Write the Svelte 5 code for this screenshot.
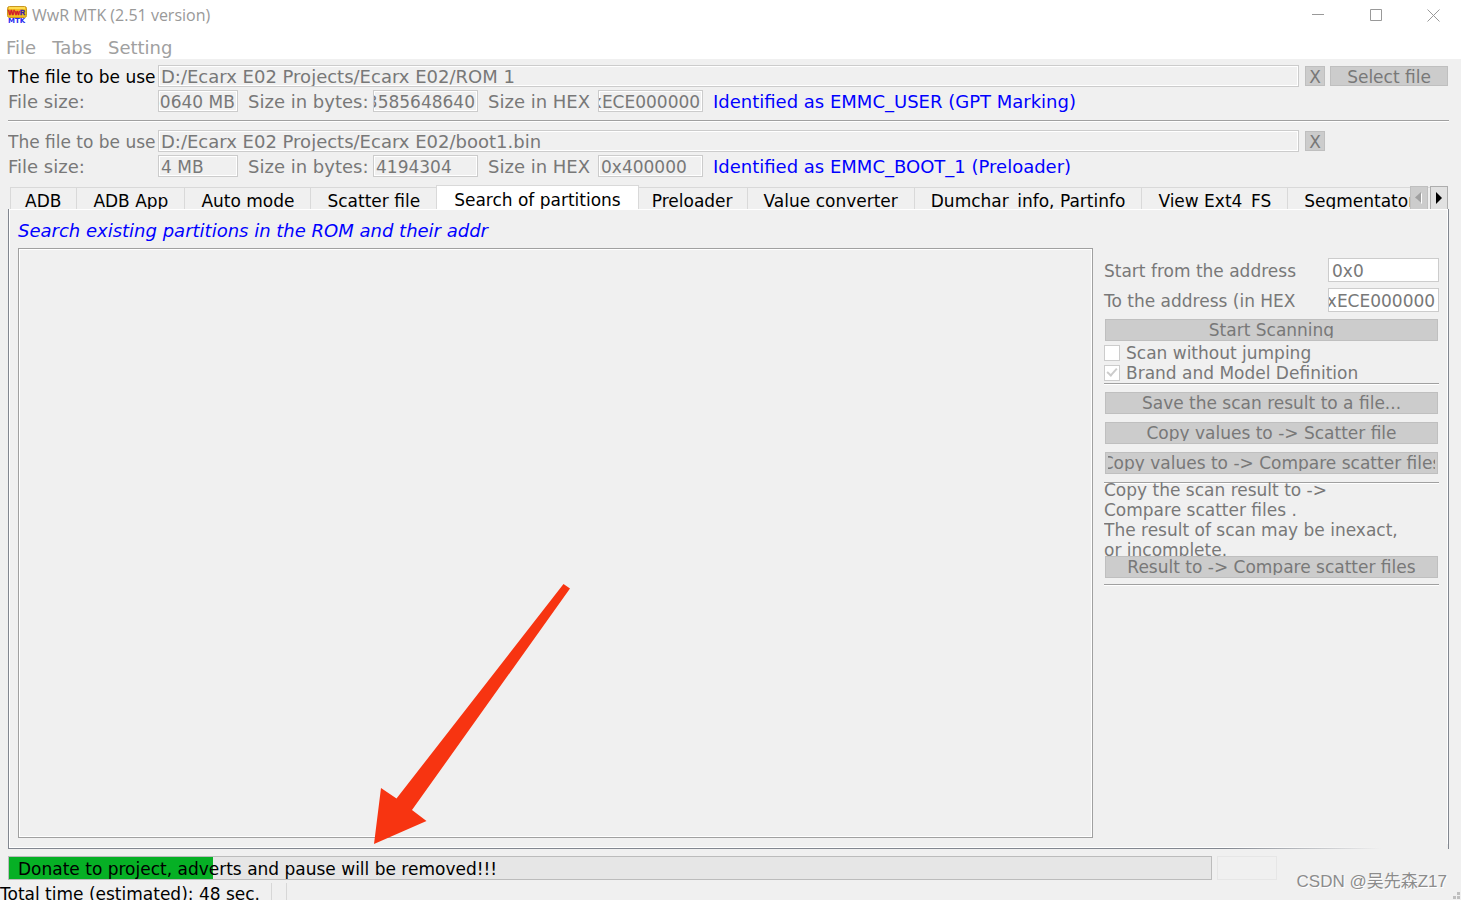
<script>
  const menus = ['File', 'Tabs', 'Setting'];

  const files = [
    {
      path: 'D:/Ecarx E02 Projects/Ecarx E02/ROM 1',
      size: '60640 MB',
      bytes: '63585648640',
      hex: '0xECE000000',
      kind: 'Identified as EMMC_USER (GPT Marking)',
      selectable: true,
    },
    {
      path: 'D:/Ecarx E02 Projects/Ecarx E02/boot1.bin',
      size: '4 MB',
      bytes: '4194304',
      hex: '0x400000',
      kind: 'Identified as EMMC_BOOT_1 (Preloader)',
      selectable: false,
    },
  ];

  const tabs = [
    'ADB',
    'ADB App',
    'Auto mode',
    'Scatter file',
    'Search of partitions',
    'Preloader',
    'Value converter',
    'Dumchar_info, Partinfo',
    'View Ext4_FS',
    'Segmentator',
  ];

  let active = $state('Search of partitions');
  let from = $state('0x0');
  let to = $state('0xECE000000');
  let noJump = $state(false);
  let brand = $state(true);
  let progress = $state(17);

  // long values show their tail, like the native edit boxes
  function showEnd(node) {
    node.scrollLeft = node.scrollWidth;
  }
</script>

<div class="window">
  <header class="titlebar">
    <svg class="logo" width="20" height="18" viewBox="0 0 20 18">
      <rect x="0.5" y="0.5" width="19" height="11" rx="2" fill="#f2bd1e" stroke="#c99722" />
      <rect x="2" y="1" width="16" height="2" fill="#ffdc50" />
      <text x="1" y="9" font-size="7" fill="#d0102a" stroke="#d0102a" stroke-width="0.400">Ww<tspan fill="#3a1fb0" stroke="#3a1fb0">R</tspan></text>
      <text class="mtk" x="1" y="17" font-size="7" fill="#2a2af0">MTK</text>
    </svg>
    <h1>WwR MTK (2.51 version)</h1>
    <div class="window-buttons">
      <button type="button" aria-label="Minimize">
        <svg width="13" height="13" viewBox="0 0 13 13"><path d="M0 5.5h12" /></svg>
      </button>
      <button type="button" aria-label="Maximize">
        <svg width="13" height="13" viewBox="0 0 13 13"><path d="M.5 .5h11v11h-11z" /></svg>
      </button>
      <button type="button" aria-label="Close">
        <svg width="13" height="13" viewBox="0 0 13 13"><path d="M.5 .5l12 12M12.5 .5l-12 12" /></svg>
      </button>
    </div>
  </header>

  <nav class="menubar">
    {#each menus as menu}
      <button type="button">{menu}</button>
    {/each}
  </nav>

  <section class="files">
    {#each files as file, i}
      <div class="file">
        <div class="path-row">
          <label for="path-{i}" class:strong={file.selectable}>The file to be use</label>
          <input id="path-{i}" value={file.path} readonly />
          <button type="button" class="btn" aria-label="Clear file">X</button>
          {#if file.selectable}
            <button type="button" class="btn select">Select file</button>
          {/if}
        </div>
        <div class="info-row">
          <label for="size-{i}">File size:</label>
          <input id="size-{i}" value={file.size} readonly use:showEnd />
          <label for="bytes-{i}">Size in bytes:</label>
          <input id="bytes-{i}" value={file.bytes} readonly use:showEnd />
          <label for="hex-{i}">Size in HEX</label>
          <input id="hex-{i}" value={file.hex} readonly use:showEnd />
          <span class="kind">{file.kind}</span>
        </div>
      </div>
    {/each}
  </section>

  <div class="tabstrip">
    <div class="tabs">
      {#each tabs as tab}
        <button type="button" class="tab" class:active={active === tab} onclick={() => active = tab}>{tab}</button>
      {/each}
    </div>
    <div class="scrollers">
      <button type="button" class="back" aria-label="Previous tabs">
        <svg width="8" height="12" viewBox="0 0 8 12"><path d="M7 1v11L1 6.500z" fill="#fff" /><path d="M6 0v11L0 5.500z" fill="#a0a0a0" /></svg>
      </button>
      <button type="button" aria-label="Next tabs">
        <svg width="8" height="12" viewBox="0 0 8 12"><path d="M1 0v12L7 6z" fill="#000" /></svg>
      </button>
    </div>
  </div>

  <main class="page">
    <h2>Search existing partitions in the ROM and their addr</h2>
    <div class="columns">
      <div class="results"></div>
      <div class="side">
        <div class="range">
          <label for="from">Start from the address</label>
          <input id="from" bind:value={from} />
          <label for="to">To the address (in HEX</label>
          <input id="to" bind:value={to} use:showEnd />
        </div>
        <button type="button" class="btn wide"><span>Start Scanning</span></button>
        <div class="checks">
          <label><input type="checkbox" bind:checked={noJump} />Scan without jumping</label>
          <label><input type="checkbox" bind:checked={brand} />Brand and Model Definition</label>
        </div>
        <div class="group">
          <button type="button" class="btn wide"><span>Save the scan result to a file...</span></button>
          <button type="button" class="btn wide"><span>Copy values to -&gt; Scatter file</span></button>
          <button type="button" class="btn wide"><span>Copy values to -&gt; Compare scatter files</span></button>
        </div>
        <div class="result-group">
          <p>
            Copy the scan result to -&gt;<br />
            Compare scatter files .<br />
            The result of scan may be inexact,<br />
            or incomplete.
          </p>
          <button type="button" class="btn wide"><span>Result to -&gt; Compare scatter files</span></button>
        </div>
      </div>
    </div>
  </main>

  <div class="bottom">
    <div class="progress">
      <div class="fill" style="width: {progress}%"></div>
      <span>Donate to project, adverts and pause will be removed!!!</span>
    </div>
    <div class="pause-box"></div>
  </div>

  <footer class="statusbar">
    <span class="cell">Total time (estimated): 48 sec.</span>
    <span class="cell small"></span>
  </footer>

  <svg class="arrow" width="196" height="260" viewBox="0 0 196 260">
    <path d="M189.500 0L196 4.500L38 226L52.500 237L0 260L7 204L22.500 214.500z" fill="#f73411" />
  </svg>

  <div class="watermark"><span>CSDN @吴先森Z17</span></div>
  <svg class="grip" width="8" height="8" viewBox="0 0 8 8">
    <path d="M4 0h3v3h-3zM0 4h3v3h-3zM4 4h3v3h-3z" fill="#bfbfbf" />
  </svg>
</div>

<style>
  :global(body) {
    background: #f0f0f0;
  }

  .window {
    position: relative;
    display: flex;
    flex-direction: column;
    height: 100vh;
    overflow: hidden;
    background: #f0f0f0;
    color: #787878;
    font-family: Verdana, 'DejaVu Sans', sans-serif;
    font-size: 17px;
    line-height: 20px;
    white-space: nowrap;
  }

  button,
  input {
    box-sizing: border-box;
    margin: 0;
    padding: 0;
    border: none;
    border-radius: 0;
    background: none;
    color: inherit;
    font: inherit;
    outline: none;
  }

  .titlebar {
    display: flex;
    align-items: center;
    gap: 5px;
    height: 30px;
    padding-left: 7px;
    background: #fff;
    color: #999;
  }

  .logo {
    font-family: 'Liberation Sans', sans-serif;
    font-weight: 700;
  }

  .mtk {
    font-family: 'DejaVu Sans', sans-serif;
  }

  h1 {
    flex: 1;
    margin: 0;
    font-family: 'Segoe UI', 'Open Sans', sans-serif;
    font-size: 16px;
    font-weight: 400;
  }

  .window-buttons {
    display: flex;
  }

  .window-buttons button {
    display: flex;
    align-items: center;
    justify-content: center;
    width: 58px;
    height: 30px;
  }

  .window-buttons button:last-child {
    width: 56px;
  }

  .window-buttons svg {
    fill: none;
    stroke: #999;
  }

  .menubar {
    display: flex;
    gap: 16px;
    height: 29px;
    padding: 0 6px;
    background: #fff;
    color: #a0a0a0;
    font-size: 18px;
  }

  .menubar button {
    padding-top: 6px;
  }

  .files {
    padding: 6px 12px 0 8px;
    font-size: 18px;
  }

  .file:first-child {
    margin-bottom: 9px;
    padding-bottom: 8px;
    border-bottom: 1px solid #a0a0a0;
    box-shadow: 0 1px #fff;
  }

  .path-row {
    display: grid;
    grid-template-columns: 150px 1fr 20px 124px;
    align-items: center;
    margin-bottom: 3px;
  }

  .path-row label {
    overflow: hidden;
    padding-top: 2px;
    font-size: 17px;
  }

  .path-row label.strong {
    color: #000;
  }

  .path-row input {
    margin-right: 6px;
  }

  .path-row .select {
    margin: 0 1px 0 5px;
  }

  .files input {
    height: 22px;
    padding: 1px 2px 0 0;
    border: 1px solid #ccc;
    box-shadow: inset 0 0 0 1px #fff;
    text-indent: 2px;
  }

  .info-row {
    display: grid;
    grid-template-columns: 150px 80px 135px 105px 120px 105px 1fr;
    align-items: center;
  }

  .info-row label {
    padding-top: 2px;
  }

  .info-row input + label {
    padding-left: 10px;
  }

  .info-row input {
    width: 100%;
    font-size: 17px;
  }

  .kind {
    padding: 2px 0 0 10px;
    color: #00f;
  }

  .btn {
    height: 20px;
    padding: 1px 0 0;
    overflow: hidden;
    background: #ccc;
    border: 1px solid #bfbfbf;
    font-size: 17px;
    line-height: 18px;
  }

  .tabstrip {
    position: relative;
    padding: 8px 31px 0 10px;
    color: #000;
  }

  .tabs {
    display: flex;
    align-items: flex-end;
    height: 24px;
    overflow: hidden;
  }

  .tab {
    display: flex;
    flex: none;
    height: 22px;
    padding: 3px 16px 0;
    border: solid #d9d9d9;
    border-width: 1px 0 0 1px;
    overflow: hidden;
  }

  .tab:first-child {
    padding: 3px 15px 0 14px;
  }

  .tab:last-child {
    flex: 1 0 auto;
  }

  .tab.active {
    height: 24px;
    padding: 4px 17px 0;
    background: #fff;
    border-right-width: 1px;
  }

  .tab.active + .tab {
    border-left: none;
    padding: 3px 14px 0 13px;
  }

  .scrollers {
    position: absolute;
    top: 9px;
    right: 13px;
    display: flex;
    gap: 2px;
  }

  .scrollers button {
    display: flex;
    align-items: center;
    justify-content: center;
    width: 18px;
    height: 23px;
    border: 1px solid #adadad;
    border-bottom: none;
    background: #e1e1e1;
  }

  .scrollers .back {
    border-color: #bfbfbf;
    background: #ccc;
  }

  .page {
    flex: 1;
    display: flex;
    flex-direction: column;
    min-height: 0;
    margin: 0 12px 0 8px;
    padding: 0 8px 10px;
    border: solid #828790;
    border-width: 0 1px 1px;
    box-shadow: inset 0 0 0 1px #fff;
  }

  h2 {
    margin: 0;
    padding: 12px 1px 7px;
    color: #00f;
    font-size: 18px;
    font-style: italic;
    font-weight: 400;
  }

  .columns {
    flex: 1;
    display: flex;
    gap: 11px;
    min-height: 0;
    padding: 0 1px;
  }

  .results {
    flex: 1;
    border: 1px solid #a0a0a0;
    box-shadow: inset 1px 1px #fff, inset -1px -1px #fff;
  }

  .side {
    width: 335px;
    padding-top: 10px;
  }

  .range {
    display: grid;
    grid-template-columns: 1fr 111px;
    align-items: center;
    gap: 6px 0;
    margin-bottom: 7px;
  }

  .range input {
    width: 100%;
    height: 24px;
    padding: 2px 3px 0 0;
    border: 1px solid #ccc;
    background: #fff;
    text-indent: 3px;
  }

  .range label {
    padding-top: 2px;
  }

  .wide {
    display: block;
    width: 333px;
    height: 22px;
    margin-left: 1px;
    padding: 0 2px 2px;
    line-height: 20px;
  }

  .wide span {
    display: flex;
    justify-content: center;
    height: 18px;
    overflow: hidden;
  }

  .checks {
    padding: 2px 0 0;
    border-bottom: 1px solid #a0a0a0;
    box-shadow: 0 1px #fff;
  }

  .checks label {
    display: flex;
    align-items: center;
    gap: 6px;
    height: 20px;
  }

  .checks input {
    appearance: none;
    position: relative;
    width: 16px;
    height: 16px;
    border: 1px solid #ccc;
    background: #fff;
  }

  .checks input:checked::after {
    content: '';
    position: absolute;
    left: 4px;
    top: 0;
    width: 4px;
    height: 8px;
    border: solid #ccc;
    border-width: 0 2px 2px 0;
    transform: rotate(42deg);
  }

  .group {
    display: flex;
    flex-direction: column;
    gap: 8px;
    padding: 8px 0;
    border-bottom: 1px solid #a0a0a0;
    box-shadow: 0 1px #fff;
  }

  .result-group {
    padding-bottom: 6px;
    border-bottom: 1px solid #a0a0a0;
    box-shadow: 0 1px #fff;
  }

  p {
    height: 76px;
    margin: -3px 0 0;
    overflow: hidden;
  }

  .bottom {
    display: flex;
    gap: 5px;
    padding: 7px 184px 0 8px;
  }

  .progress {
    position: relative;
    flex: 1;
    height: 22px;
    border: 1px solid #bcbcbc;
    background: #e6e6e6;
    color: #000;
  }

  .progress .fill {
    height: 100%;
    background: #06b025;
  }

  .progress span {
    position: absolute;
    left: 9px;
    top: 2px;
  }

  .pause-box {
    width: 58px;
    height: 22px;
    border: 1px solid #e6e6e6;
  }

  .statusbar {
    display: flex;
    height: 17px;
    padding-top: 3px;
    color: #000;
  }

  .cell {
    min-width: 271px;
    padding-top: 1px;
    border-right: 1px solid #d7d7d7;
  }

  .cell.small {
    min-width: 14px;
  }

  .arrow {
    position: absolute;
    left: 374px;
    bottom: 56px;
  }

  .watermark {
    position: absolute;
    right: 8px;
    bottom: 4px;
    display: flex;
    align-items: flex-end;
    justify-content: flex-end;
    width: 223px;
    height: 66px;
    padding-right: 6px;
    background: linear-gradient(90deg, rgba(240, 240, 240, 0), #f0f0f0 70%) 0 14px / 224px 8px no-repeat;
    color: #8c8c8c;
    font-family: 'Liberation Sans', 'Noto Sans CJK SC', sans-serif;
    font-size: 17px;
    line-height: 28px;
    text-shadow: 1px 1px #fff;
  }

  .grip {
    position: absolute;
    right: 0;
    bottom: 0;
  }
</style>
